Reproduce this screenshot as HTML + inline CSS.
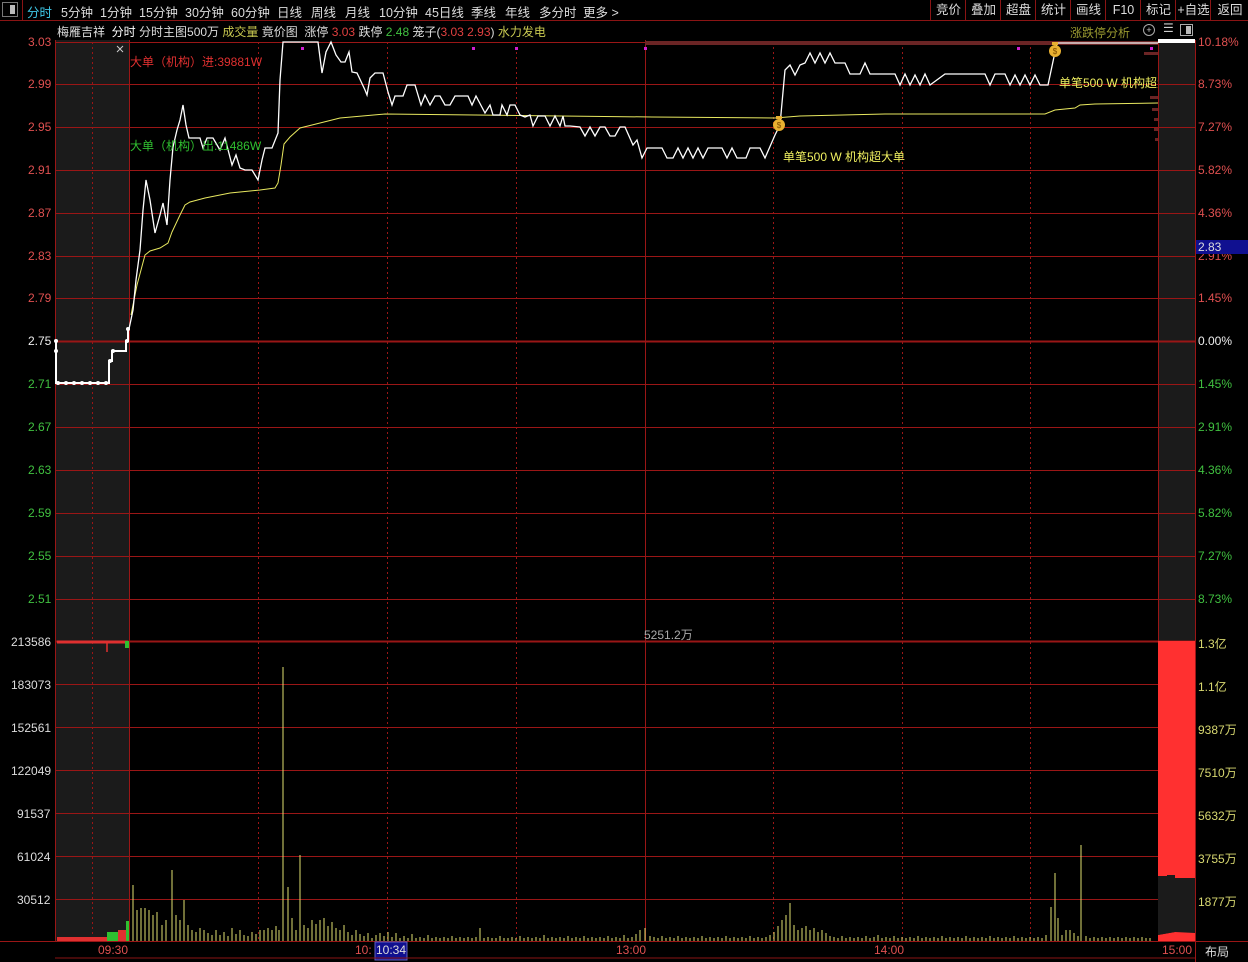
<!DOCTYPE html>
<html><head><meta charset="utf-8"><style>
*{margin:0;padding:0}
body{width:1248px;height:962px;background:#000;overflow:hidden;font-family:"Liberation Sans","Noto Sans CJK SC",sans-serif;font-size:12px;position:relative}
.top{position:absolute;left:0;top:0;width:1248px;height:20px;border-bottom:1px solid #8a1414;color:#ddd}
.top span{position:absolute;top:2px;font-size:12.5px}
.btn{position:absolute;top:0;height:20px;border-left:1px solid #8a1414;color:#ddd;font-size:12.5px;text-align:center;line-height:20px}
.t{position:absolute;white-space:nowrap}
svg{position:absolute;left:0;top:0}
</style></head><body>
<div class="top">
<div style="position:absolute;left:2px;top:2px;width:16px;height:15px;border:1px solid #777;box-sizing:border-box"><div style="position:absolute;right:2px;top:2px;width:5px;height:9px;background:#bbb"></div></div>
<div style="position:absolute;left:22px;top:0;width:1px;height:20px;background:#8a1414"></div>
<span style="left:27px;color:#3fc9e8">分时</span><span style="left:61px">5分钟</span><span style="left:100px">1分钟</span><span style="left:139px">15分钟</span><span style="left:185px">30分钟</span><span style="left:231px">60分钟</span><span style="left:277px">日线</span><span style="left:311px">周线</span><span style="left:345px">月线</span><span style="left:379px">10分钟</span><span style="left:425px">45日线</span><span style="left:471px">季线</span><span style="left:505px">年线</span><span style="left:539px">多分时</span><span style="left:583px">更多 &gt;</span>
<div class="btn" style="left:930px;width:35px">竞价</div><div class="btn" style="left:965px;width:35px">叠加</div><div class="btn" style="left:1000px;width:35px">超盘</div><div class="btn" style="left:1035px;width:35px">统计</div><div class="btn" style="left:1070px;width:35px">画线</div><div class="btn" style="left:1105px;width:35px">F10</div><div class="btn" style="left:1140px;width:35px">标记</div><div class="btn" style="left:1175px;width:35px">+自选</div><div class="btn" style="left:1210px;width:38px">返回</div>
</div>
<div class="t" style="left:57px;top:23px;color:#ddd">梅雁吉祥 &nbsp;<span style="color:#fff">分时</span> 分时主图500万 <span style="color:#c8c850">成交量</span> 竟价图 &nbsp;涨停 <span style="color:#e04040">3.03</span> 跌停 <span style="color:#40c040">2.48</span> 笼子(<span style="color:#e04040">3.03 2.93</span>) <span style="color:#c8c850">水力发电</span></div>
<div class="t" style="left:1070px;top:24px;color:#9a9a30">涨跌停分析</div>
<div class="t" style="left:1143px;top:24px;width:10px;height:10px;border:1px solid #aaa;border-radius:50%;font-size:9px;line-height:10px;text-align:center;color:#ccc">+</div>
<div class="t" style="left:1163px;top:21px;color:#ccc">☰</div>
<div class="t" style="left:1180px;top:24px;width:11px;height:10px;border:1px solid #aaa"><div style="position:absolute;right:1px;top:1px;width:5px;height:8px;background:#bbb"></div></div>

<svg width="1248" height="962" xmlns="http://www.w3.org/2000/svg">
<rect x="55" y="40" width="74" height="901" fill="#1b1b1b"/>
<rect x="1158" y="40" width="37" height="901" fill="#1b1b1b"/>
<g stroke="#9a1616" stroke-width="1">
<path d="M55 42.5H1195M55 84.5H1195M55 127.5H1195M55 170.5H1195M55 213.5H1195M55 256.5H1195M55 298.5H1195M55 384.5H1195M55 427.5H1195M55 470.5H1195M55 513.5H1195M55 556.5H1195M55 599.5H1195M55 684.5H1195M55 727.5H1195M55 770.5H1195M55 813.5H1195M55 856.5H1195M55 899.5H1195M0 941.5H1248"/>
<path d="M55 341.5H1195M55 641.5H1195" stroke-width="2"/>
<path d="M55.5 40V941M129.5 40V941M645.5 40V941M1158.5 40V941M1195.5 40V962"/>
</g>
<g stroke="#9a1616" stroke-dasharray="2,3">
<path d="M92.5 42V941M258.5 42V941M387.5 42V941M516.5 42V941M773.5 42V941M902.5 42V941M1030.5 42V941"/>
</g>
<rect x="645" y="41" width="513" height="4" fill="#6b2525"/>
<rect x="1158" y="39" width="37" height="4" fill="#fff"/>
<g fill="#6b2525"><rect x="1144" y="52" width="14" height="3"/><rect x="1150" y="96" width="8" height="3"/><rect x="1152" y="108" width="6" height="3"/><rect x="1154" y="118" width="4" height="3"/><rect x="1154" y="128" width="4" height="3"/><rect x="1155" y="138" width="3" height="3"/></g>
<g fill="#d020d0"><rect x="301" y="47" width="3" height="3"/><rect x="472" y="47" width="3" height="3"/><rect x="515" y="47" width="3" height="3"/><rect x="644" y="47" width="3" height="3"/><rect x="1017" y="47" width="3" height="3"/><rect x="1150" y="47" width="3" height="3"/></g>
<path d="M117 46L123 52M123 46L117 52" stroke="#ccc"/>
<path d="M56 341V351V383H109V361H112V351H126V341H128V329" fill="none" stroke="#fff" stroke-width="2"/>
<g fill="#fff"><circle cx="56" cy="341" r="2"/><circle cx="56" cy="351" r="2"/><circle cx="58" cy="383" r="2"/><circle cx="66" cy="383" r="2"/><circle cx="74" cy="383" r="2"/><circle cx="82" cy="383" r="2"/><circle cx="90" cy="383" r="2"/><circle cx="98" cy="383" r="2"/><circle cx="106" cy="383" r="2"/><circle cx="110" cy="361" r="2"/><circle cx="113" cy="351" r="2"/><circle cx="127" cy="341" r="2"/><circle cx="128" cy="329" r="2"/></g>
<polyline fill="none" stroke="#e8e860" stroke-width="1" points="131,315 137,285 145,255 150,251 160,248 168,243 172,232 180,215 185,205 190,202 205,198 215,196 230,193 260,190 275,188 278,183 281,165 284,144 290,137 300,128 320,123 340,118 385,114 652,117 775,118 800,116 885,114 1045,114 1055,110 1075,108 1080,105 1095,104 1158,103"/>
<polyline fill="none" stroke="#fff" stroke-width="1.3" points="129,329 133,310 136,280 140,250 143,210 146,180 150,200 155,233 160,215 163,203 167,225 170,180 173,147 177,130 180,120 183,105 186,125 189,138 200,138 203,148 207,138 213,138 220,150 225,138 232,165 236,155 240,168 245,170 252,170 258,180 262,160 265,148 272,148 278,133 280,80 283,42 318,42 322,73 326,52 331,42 336,55 341,62 345,62 349,52 352,72 357,73 365,90 367,95 370,78 375,73 383,73 388,92 392,105 395,96 403,96 407,85 415,85 421,105 425,95 430,105 435,96 440,96 445,105 450,105 455,96 468,96 472,105 476,96 485,113 490,105 493,115 500,115 502,105 507,115 510,105 515,105 520,115 525,117 530,115 533,126 538,116 545,116 550,126 555,116 560,126 563,116 565,126 570,126 580,127 585,136 590,127 595,136 600,127 605,127 610,136 615,136 620,127 625,127 633,145 637,140 642,158 647,148 662,148 667,158 673,158 678,148 683,158 688,148 693,158 698,148 703,158 708,148 722,148 727,158 732,148 737,158 746,158 750,148 760,148 765,158 775,135 780,125 785,70 790,65 795,75 800,65 805,63 810,53 815,63 820,53 825,63 830,53 835,63 845,63 850,74 860,74 865,63 870,74 895,74 900,85 905,74 910,85 915,75 920,85 925,74 930,85 945,74 985,74 990,85 995,74 1005,74 1010,85 1015,75 1020,85 1025,75 1030,85 1035,75 1040,85 1048,85 1055,52 1057,43 1158,43"/>
<g><circle cx="779" cy="125" r="6" fill="#e8b030"/><rect x="776" y="116" width="6" height="3" fill="#e8b030"/><text x="779" y="128" font-size="8" text-anchor="middle" fill="#7a4a00">$</text></g>
<g><circle cx="1055" cy="51" r="6" fill="#e8b030"/><rect x="1052" y="42" width="6" height="3" fill="#e8b030"/><text x="1055" y="54" font-size="8" text-anchor="middle" fill="#7a4a00">$</text></g>
<path d="M57 642H128" stroke="#e03030" stroke-width="3"/>
<path d="M107 642V652" stroke="#e03030" stroke-width="1.5"/>
<rect x="125" y="641" width="4" height="7" fill="#30c030"/>
<rect x="57" y="937" width="50" height="4" fill="#e03030"/>
<rect x="107" y="932" width="11" height="9" fill="#30c030"/>
<rect x="118" y="930" width="8" height="11" fill="#e03030"/>
<rect x="126" y="921" width="3" height="20" fill="#30c030"/>
<rect x="1158" y="641" width="37" height="237" fill="#ff3030"/>
<path d="M1158 935L1175 932L1195 930V941H1158Z" fill="#ff3030"/>
<path stroke="#e0e070" stroke-width="1" fill="none" d="M133 885V941M137 910V941M141 908V941M145 908V941M149 910V941M153 915V941M157 912V941M162 925V941M166 920V941M172 870V941M176 915V941M180 920V941M184 900V941M188 925V941M192 930V941M196 932V941M200 928V941M204 930V941M208 933V941M212 935V941M216 930V941M220 935V941M224 932V941M228 936V941M232 928V941M236 934V941M240 930V941M244 935V941M248 936V941M252 932V941M256 934V941M260 930V941M264 930V941M268 928V941M272 930V941M276 926V941M279 930V941M283 667V941M288 887V941M292 918V941M296 930V941M300 855V941M304 925V941M308 928V941M312 920V941M316 924V941M320 920V941M324 918V941M328 926V941M332 922V941M336 928V941M340 930V941M344 925V941M348 932V941M352 935V941M356 930V941M360 934V941M364 936V941M368 933V941M372 938V941M376 935V941M380 933V941M384 936V941M388 932V941M392 937V941M396 933V941M400 938V941M404 936V941M408 938V941M412 934V941M416 938V941M420 937V941M424 938V941M428 935V941M432 938V941M436 937V941M440 938V941M444 937V941M448 938V941M452 936V941M456 938V941M460 937V941M464 938V941M468 937V941M472 938V941M476 937V941M480 928V941M484 938V941M488 937V941M492 938V941M496 938V941M500 936V941M504 938V941M508 938V941M512 937V941M516 938V941M520 936V941M524 938V941M528 937V941M532 938V941M536 937V941M540 938V941M544 935V941M548 938V941M552 937V941M556 938V941M560 937V941M564 938V941M568 936V941M572 938V941M576 937V941M580 938V941M584 936V941M588 938V941M592 937V941M596 938V941M600 937V941M604 938V941M608 936V941M612 938V941M616 937V941M620 938V941M624 935V941M628 938V941M632 937V941M636 934V941M640 930V941M645 928V941M650 936V941M654 937V941M658 938V941M662 936V941M666 938V941M670 937V941M674 938V941M678 936V941M682 938V941M686 937V941M690 938V941M694 937V941M698 938V941M702 936V941M706 938V941M710 937V941M714 938V941M718 937V941M722 938V941M726 936V941M730 938V941M734 937V941M738 938V941M742 937V941M746 938V941M750 936V941M754 938V941M758 937V941M762 938V941M766 937V941M770 935V941M774 932V941M778 926V941M782 920V941M786 915V941M790 903V941M794 925V941M798 930V941M802 928V941M806 926V941M810 930V941M814 928V941M818 932V941M822 930V941M826 933V941M830 936V941M834 937V941M838 938V941M842 936V941M846 938V941M850 937V941M854 938V941M858 937V941M862 938V941M866 936V941M870 938V941M874 937V941M878 935V941M882 938V941M886 937V941M890 938V941M894 936V941M898 938V941M902 937V941M906 938V941M910 937V941M914 938V941M918 936V941M922 938V941M926 937V941M930 938V941M934 937V941M938 938V941M942 936V941M946 938V941M950 937V941M954 938V941M958 937V941M962 938V941M966 936V941M970 938V941M974 937V941M978 938V941M982 937V941M986 938V941M990 936V941M994 938V941M998 937V941M1002 938V941M1006 937V941M1010 938V941M1014 936V941M1018 938V941M1022 937V941M1026 938V941M1030 937V941M1034 938V941M1038 937V941M1042 938V941M1046 935V941M1051 907V941M1055 873V941M1058 918V941M1062 935V941M1066 930V941M1070 930V941M1074 933V941M1078 936V941M1081 845V941M1086 936V941M1090 938V941M1094 937V941M1098 938V941M1102 937V941M1106 938V941M1110 937V941M1114 938V941M1118 937V941M1122 938V941M1126 937V941M1130 938V941M1134 937V941M1138 938V941M1142 937V941M1146 938V941M1150 938V941"/>
<path d="M1158 908V876H1167V875H1175V880H1185V884H1195V933L1175 932L1158 935Z" fill="#1b1b1b"/>
<rect x="375" y="942" width="32" height="18" fill="#101090" stroke="#6060c0"/>
<path d="M55 958H1195" stroke="#8a1414"/>
</svg>
<div class="t" style="left:130px;top:53px;color:#e03030">大单（机构）进:39881W</div>
<div class="t" style="left:130px;top:137px;color:#30c030">大单（机构）出:11486W</div>
<div class="t" style="left:783px;top:148px;color:#f0f060">单笔500 W 机构超大单</div>
<div class="t" style="left:1059px;top:74px;width:99px;overflow:hidden;color:#f0f060">单笔500 W 机构超大单</div>
<div class="t" style="left:644px;top:626px;color:#aaa">5251.2万</div>
<div class="t" style="left:28px;top:35px;color:#e05050">3.03</div>
<div class="t" style="left:28px;top:77px;color:#e05050">2.99</div>
<div class="t" style="left:28px;top:120px;color:#e05050">2.95</div>
<div class="t" style="left:28px;top:163px;color:#e05050">2.91</div>
<div class="t" style="left:28px;top:206px;color:#e05050">2.87</div>
<div class="t" style="left:28px;top:249px;color:#e05050">2.83</div>
<div class="t" style="left:28px;top:291px;color:#e05050">2.79</div>
<div class="t" style="left:28px;top:334px;color:#eee">2.75</div>
<div class="t" style="left:28px;top:377px;color:#40c040">2.71</div>
<div class="t" style="left:28px;top:420px;color:#40c040">2.67</div>
<div class="t" style="left:28px;top:463px;color:#40c040">2.63</div>
<div class="t" style="left:28px;top:506px;color:#40c040">2.59</div>
<div class="t" style="left:28px;top:549px;color:#40c040">2.55</div>
<div class="t" style="left:28px;top:592px;color:#40c040">2.51</div>
<div class="t" style="left:11px;top:635px;color:#ddd">213586</div>
<div class="t" style="left:11px;top:678px;color:#ddd">183073</div>
<div class="t" style="left:11px;top:721px;color:#ddd">152561</div>
<div class="t" style="left:11px;top:764px;color:#ddd">122049</div>
<div class="t" style="left:17px;top:807px;color:#ddd">91537</div>
<div class="t" style="left:17px;top:850px;color:#ddd">61024</div>
<div class="t" style="left:17px;top:893px;color:#ddd">30512</div>
<div class="t" style="left:1198px;top:35px;color:#e05050">10.18%</div>
<div class="t" style="left:1198px;top:77px;color:#e05050">8.73%</div>
<div class="t" style="left:1198px;top:120px;color:#e05050">7.27%</div>
<div class="t" style="left:1198px;top:163px;color:#e05050">5.82%</div>
<div class="t" style="left:1198px;top:206px;color:#e05050">4.36%</div>
<div class="t" style="left:1198px;top:249px;color:#e05050">2.91%</div>
<div class="t" style="left:1196px;top:240px;width:52px;height:14px;background:#101090;color:#ddd;line-height:14px;padding-left:2px">2.83</div>
<div class="t" style="left:1198px;top:291px;color:#e05050">1.45%</div>
<div class="t" style="left:1198px;top:334px;color:#eee">0.00%</div>
<div class="t" style="left:1198px;top:377px;color:#40c040">1.45%</div>
<div class="t" style="left:1198px;top:420px;color:#40c040">2.91%</div>
<div class="t" style="left:1198px;top:463px;color:#40c040">4.36%</div>
<div class="t" style="left:1198px;top:506px;color:#40c040">5.82%</div>
<div class="t" style="left:1198px;top:549px;color:#40c040">7.27%</div>
<div class="t" style="left:1198px;top:592px;color:#40c040">8.73%</div>
<div class="t" style="left:1198px;top:635px;color:#d8d870">1.3亿</div>
<div class="t" style="left:1198px;top:678px;color:#d8d870">1.1亿</div>
<div class="t" style="left:1198px;top:721px;color:#d8d870">9387万</div>
<div class="t" style="left:1198px;top:764px;color:#d8d870">7510万</div>
<div class="t" style="left:1198px;top:807px;color:#d8d870">5632万</div>
<div class="t" style="left:1198px;top:850px;color:#d8d870">3755万</div>
<div class="t" style="left:1198px;top:893px;color:#d8d870">1877万</div>
<div class="t" style="left:98px;top:943px;color:#e05050">09:30</div>
<div class="t" style="left:355px;top:943px;color:#e05050">10:</div>
<div class="t" style="left:376px;top:943px;color:#ddd">10:34</div>
<div class="t" style="left:616px;top:943px;color:#e05050">13:00</div>
<div class="t" style="left:874px;top:943px;color:#e05050">14:00</div>
<div class="t" style="left:1162px;top:943px;color:#e05050">15:00</div>
<div class="t" style="left:1205px;top:943px;color:#ddd">布局</div>
</body></html>
